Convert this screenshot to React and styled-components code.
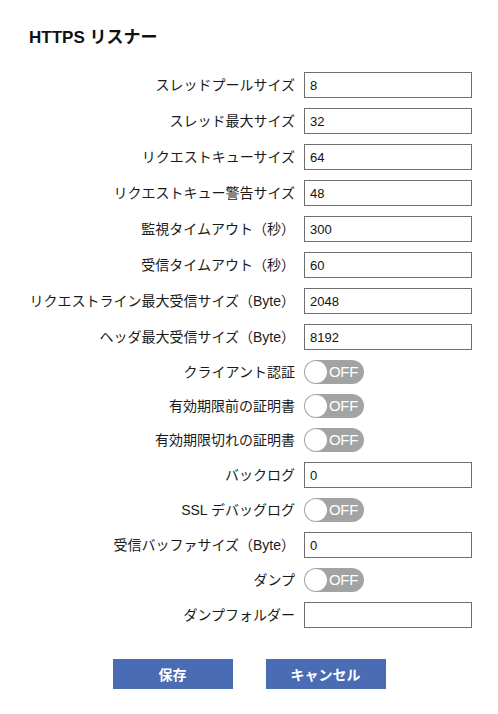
import React from "react";
import styled, { createGlobalStyle } from "styled-components";

const GlobalStyle = createGlobalStyle`
  html, body { margin: 0; padding: 0; background: #fff; }
  body {
    font-family: "Liberation Sans", "Noto Sans CJK JP", sans-serif;
    color: #1a1a1a;
  }
`;

const Page = styled.div`
  width: 498px;
  padding: 28px 0 0 0;
  box-sizing: border-box;
`;

const Title = styled.h2`
  margin: 0 0 24px 29px;
  font-size: 17px;
  line-height: 20px;
  font-weight: bold;
  color: #111;
`;

const Form = styled.div`
  display: grid;
  grid-template-columns: 267px 168px;
  column-gap: 9px;
  row-gap: 10px;
  align-items: center;
  padding-left: 28px;
`;

const Label = styled.label`
  text-align: right;
  font-size: 14px;
  line-height: 18px;
  color: #1a1a1a;
  white-space: nowrap;
`;

const Input = styled.input`
  box-sizing: border-box;
  width: 168px;
  height: 26px;
  border: 1px solid #6f6f6f;
  border-radius: 0;
  padding: 0 5px;
  font-family: "Liberation Sans", Arial, sans-serif;
  font-size: 13px;
  color: #111;
  background: #fff;
  outline: none;
`;

const ToggleWrap = styled.div`
  display: flex;
  align-items: center;
`;

const Toggle = styled.div`
  box-sizing: border-box;
  width: 60px;
  height: 24px;
  border-radius: 12px;
  background: ${(p) => (p.$on ? "#4a6cb4" : "#a3a3a3")};
  display: flex;
  align-items: center;
  padding: 0 0 0 1px;
  gap: 2px;
`;

const Knob = styled.span`
  width: 22px;
  height: 22px;
  border-radius: 50%;
  background: #fff;
  flex: none;
`;

const ToggleText = styled.span`
  color: #fff;
  font-family: "Liberation Sans", Arial, sans-serif;
  font-size: 15px;
  line-height: 24px;
  letter-spacing: -0.3px;
`;

const Buttons = styled.div`
  display: flex;
  justify-content: center;
  gap: 33px;
  margin-top: 31px;
`;

const Button = styled.button`
  width: 120px;
  height: 30px;
  border: none;
  border-radius: 0;
  background: #4a6cb4;
  color: #fff;
  font-family: "Liberation Sans", "Noto Sans CJK JP", sans-serif;
  font-size: 14px;
  font-weight: bold;
  cursor: pointer;
  padding: 0;
`;

const fields = [
  { label: "スレッドプールサイズ", value: "8" },
  { label: "スレッド最大サイズ", value: "32" },
  { label: "リクエストキューサイズ", value: "64" },
  { label: "リクエストキュー警告サイズ", value: "48" },
  { label: "監視タイムアウト（秒）", value: "300" },
  { label: "受信タイムアウト（秒）", value: "60" },
  { label: "リクエストライン最大受信サイズ（Byte）", value: "2048" },
  { label: "ヘッダ最大受信サイズ（Byte）", value: "8192" },
  { label: "クライアント認証", toggle: true },
  { label: "有効期限前の証明書", toggle: true },
  { label: "有効期限切れの証明書", toggle: true },
  { label: "バックログ", value: "0" },
  { label: "SSL デバッグログ", toggle: true },
  { label: "受信バッファサイズ（Byte）", value: "0" },
  { label: "ダンプ", toggle: true },
  { label: "ダンプフォルダー", value: "" },
];

export default function App() {
  return (
    <>
      <GlobalStyle />
      <Page>
        <Title>HTTPS リスナー</Title>
        <Form>
          {fields.map((f, i) => (
            <React.Fragment key={i}>
              <Label>{f.label}</Label>
              {f.toggle ? (
                <ToggleWrap>
                  <Toggle>
                    <Knob />
                    <ToggleText>OFF</ToggleText>
                  </Toggle>
                </ToggleWrap>
              ) : (
                <Input type="text" defaultValue={f.value} />
              )}
            </React.Fragment>
          ))}
        </Form>
        <Buttons>
          <Button>保存</Button>
          <Button>キャンセル</Button>
        </Buttons>
      </Page>
    </>
  );
}
